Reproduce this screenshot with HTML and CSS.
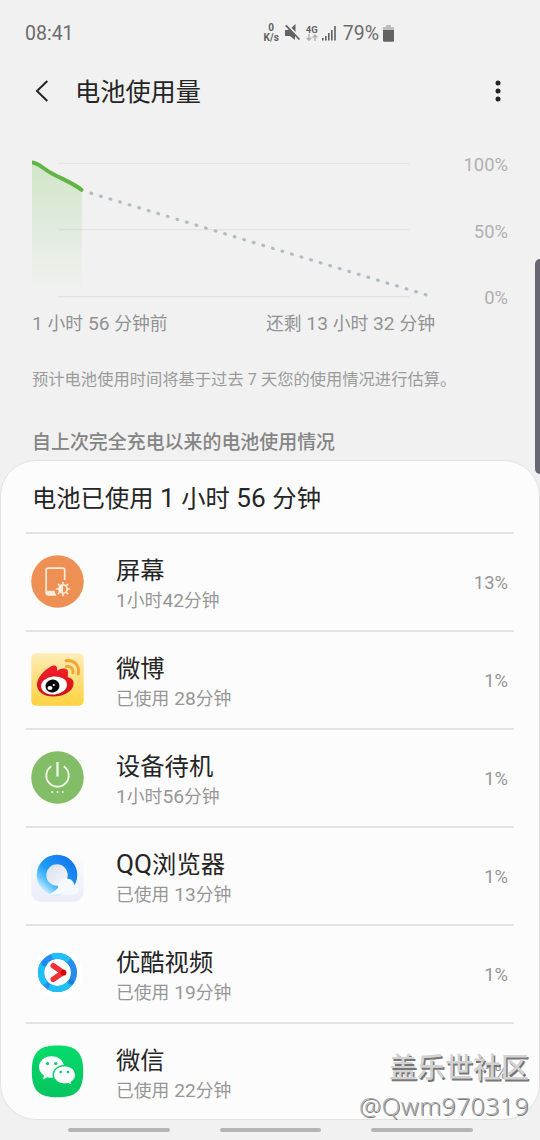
FILE: index.html
```html
<!DOCTYPE html>
<html lang="zh-CN">
<head>
<meta charset="utf-8">
<title>电池使用量</title>
<link rel="stylesheet" href="styles.css">
</head>
<body>
<div class="screen">
  <header class="status">
    <span class="clock">08:41</span>
    <div class="indicators">
      <div class="speed"><span>0</span><span>K/s</span></div>
      <svg class="mute" width="16" height="18" viewBox="0 0 16 18"><path fill="#626262" d="M0 6h3l2-1.800 5 6V16L5 12H0z M6.500 3.800 10.500 0v8z"/><path stroke="#f1f1f1" stroke-width="1.300" d="M2 1.300 15.500 15"/><path stroke="#626262" stroke-width="1.800" d="M.8 1.300 14.500 15.500"/></svg>
      <div class="network"><span>4G</span><svg width="12" height="8" viewBox="0 0 12 8" fill="none" stroke="#b0b0b0" stroke-width="1.400"><path d="M3 0v6M.6 3.600 3 6.200l2.400-2.600M9 7V1M6.600 3.600 9 1l2.400 2.600"/></svg></div>
      <svg class="signal" width="15" height="15" viewBox="0 0 15 15" fill="#626262"><path d="M0 12h1.600v2.500H0zM3 10h1.600v4.500H3zM6 7h1.600v7.500H6zM9 4h1.600v10.500H9zM12.200 0h1.600v14.500h-1.600z"/></svg>
      <span class="level">79%</span>
      <svg class="cell" width="11" height="17" viewBox="0 0 11 17"><path fill="#bdbdbd" d="M3 0h5v2h3v5H0V2h3z"/><path fill="#626262" d="M0 5h11v10.500a1.300 1.300 0 0 1-1.300 1.300H1.300A1.300 1.300 0 0 1 0 15.500z"/></svg>
    </div>
  </header>

  <nav class="titlebar">
    <svg width="14" height="22" viewBox="0 0 14 22" fill="none" stroke="#252525" stroke-width="2"><path d="M12.300 1 2 11l10.300 10"/></svg>
    <h1>电池使用量</h1>
    <svg class="more" width="6" height="22" viewBox="0 0 6 22" fill="#252525"><circle cx="3" cy="3" r="2.500"/><circle cx="3" cy="11" r="2.500"/><circle cx="3" cy="19" r="2.500"/></svg>
  </nav>

  <section class="chart">
    <div class="plot">
      <svg width="408" height="148" viewBox="0 0 408 148" fill="none">
        <defs><linearGradient id="charge" x1="0" y1="0" x2="0" y2="1"><stop offset="0" stop-color="#72c655" stop-opacity=".26"/><stop offset="1" stop-color="#72c655" stop-opacity="0"/></linearGradient></defs>
        <path stroke="#e3e3e3" stroke-width="1.300" d="M25.500 8.300H377M25.500 74.700H377M25.500 141.600H377"/>
        <path fill="url(#charge)" d="M0 7c8 1 12 7 20 12 11 6 21 9 29.800 16v103H0z"/>
        <path stroke="#63b446" stroke-width="4" stroke-linecap="round" d="M49.500 34.800C41 28 30 24 20 18.500 11 14 8 8.500 0 7.500"/>
        <path stroke="#b0bdc3" stroke-width="3.200" stroke-linecap="round" stroke-dasharray=".7 9.280" d="M59 38.200 396 140.400"/>
      </svg>
      <div class="scale"><span>100%</span><span>50%</span><span>0%</span></div>
    </div>
    <div class="range"><span><span class="n">1 </span>小时<span class="n"> 56 </span>分钟前</span><span>还剩<span class="n"> 13 </span>小时<span class="n"> 32 </span>分钟</span></div>
  </section>
  <p class="note">预计电池使用时间将基于过去 7 天您的使用情况进行估算。</p>
  <h2 class="section">自上次完全充电以来的电池使用情况</h2>

  <main class="card">
    <h3>电池已使用<span class="n"> 1 </span>小时<span class="n"> 56 </span>分钟</h3>
    <div class="row">
      <svg class="icon" viewBox="0 0 53 53"><circle cx="26.500" cy="26.500" r="26.300" fill="#ee8f54"/><path d="M33.700 25V15.200a2 2 0 0 0-2-2H17.200a2 2 0 0 0-2 2v22.600a2 2 0 0 0 2 2h8" fill="none" stroke="#ffecd9" stroke-width="1.700"/><path d="M15 35.800h8.500l1.300 4.200H17a2 2 0 0 1-2-2z" fill="#ffecd9"/><g stroke="#ffecd9" stroke-width="1.700" stroke-linecap="round"><circle cx="32" cy="34" r="4.200" fill="none"/><path d="M32 27.500v1M32 39.500v1M25.500 34h1M37.500 34h1M27.400 29.400l.7.700M35.900 37.900l.7.700M36.600 29.400l-.7.700M28.100 37.900l-.7.700"/></g><path d="M32 30a4 4 0 0 0 0 8z" fill="#ffecd9"/></svg>
      <div class="label"><b>屏幕</b><span class="used"><span class="n">1</span>小时<span class="n">42</span>分钟</span></div><em>13%</em>
    </div>
    <div class="row">
      <svg class="icon" viewBox="0 0 53 53"><defs><linearGradient id="wb" x1="0" y1="0" x2="0" y2="1"><stop stop-color="#ffecb8"/><stop offset="1" stop-color="#ffd23f"/></linearGradient><linearGradient id="wr" x1="0" y1="0" x2="0" y2="1"><stop stop-color="#f3202a"/><stop offset="1" stop-color="#cf1019"/></linearGradient></defs><rect x=".3" y=".3" width="52.400" height="52.400" rx="5" fill="url(#wb)"/><path fill="url(#wr)" d="M6 33c-1-7 7-16 13-19 5-3 8-1 7 4 6-4 12-3 11 3 0 2-1 3 1 3.500 3 1 5 3 4.500 7C41.500 39 32 43.500 22 43.500 13 43.500 7 39 6 33z"/><ellipse cx="23" cy="32.500" rx="13" ry="9" fill="#fff" transform="rotate(-7 23 32.500)"/><ellipse cx="21.500" cy="33" rx="7" ry="6.500" fill="#080808" transform="rotate(-12 21.500 33)"/><ellipse cx="19" cy="35" rx="2.500" ry="2" fill="#fff"/><circle cx="22.800" cy="32" r="1.100" fill="#fff"/><path d="M35 7.700c8-1.200 14 5 12.300 13.300M35.500 13.500c4.500-.6 7.200 2.500 6.300 6.200" fill="none" stroke="#f0a535" stroke-width="2.900" stroke-linecap="round"/></svg>
      <div class="label"><b>微博</b><span class="used">已使用<span class="n"> 28</span>分钟</span></div><em>1%</em>
    </div>
    <div class="row">
      <svg class="icon" viewBox="0 0 53 53"><circle cx="26.500" cy="26.500" r="26.300" fill="#84bd68"/><g fill="none" stroke="#f3ffe9" stroke-width="1.800"><path d="M26.500 11v14.500" stroke-width="2.200"/><path d="M20.300 15.200A11.200 11.200 0 1 0 32.700 15.200"/></g><g fill="#f3ffe9"><circle cx="21.200" cy="41" r="1"/><circle cx="26.500" cy="41" r="1"/><circle cx="31.800" cy="41" r="1"/></g></svg>
      <div class="label"><b>设备待机</b><span class="used"><span class="n">1</span>小时<span class="n">56</span>分钟</span></div><em>1%</em>
    </div>
    <div class="row">
      <svg class="icon" viewBox="0 0 53 53"><defs><linearGradient id="qb" x1="0" y1="0" x2="0" y2="1"><stop stop-color="#fcfdff"/><stop offset="1" stop-color="#e9eef7"/></linearGradient><linearGradient id="qr" x1=".85" y1=".2" x2=".2" y2=".95"><stop stop-color="#167aef"/><stop offset=".5" stop-color="#1c9bf7"/><stop offset=".78" stop-color="#66c7fb"/><stop offset="1" stop-color="#d9f1ff"/></linearGradient><linearGradient id="qc" x1="0" y1="0" x2="1" y2="1"><stop stop-color="#d8dfea"/><stop offset="1" stop-color="#f7f9fd"/></linearGradient></defs><rect x=".3" y=".3" width="52.400" height="52.400" rx="9" fill="url(#qb)"/><circle cx="26" cy="26" r="20.300" fill="url(#qr)"/><circle cx="26" cy="26" r="10.700" fill="url(#qc)"/><path fill="#f6f9fe" d="M17 45.800c4-1.500 6.500-3.500 10-6.800 0-5 3-9.500 8.500-9.500 5 0 7.500 3.500 8 6.500 5-.2 6 9.500-.5 9.800z"/></svg>
      <div class="label"><b><span class="n">QQ</span>浏览器</b><span class="used">已使用<span class="n"> 13</span>分钟</span></div><em>1%</em>
    </div>
    <div class="row">
      <svg class="icon" viewBox="0 0 53 53"><circle cx="26.500" cy="26.500" r="25.500" fill="#fff"/><circle cx="26.500" cy="25.500" r="16.500" fill="none" stroke="#258df2" stroke-width="6.200"/><path d="M12.500 17a16.500 16.500 0 0 0 2 20M21 9.900a16.500 16.500 0 0 1 17 3.500M18 39.700a16.500 16.500 0 0 0 22-5" fill="none" stroke="#20bff6" stroke-width="6.200"/><circle cx="13.500" cy="16.500" r="2.800" fill="#168df0"/><circle cx="40" cy="35" r="2.800" fill="#167fdf"/><path d="M22.300 18.800 32 25.500l-9.700 6.800" fill="none" stroke="#ee3137" stroke-width="5.600" stroke-linecap="round" stroke-linejoin="round"/><circle cx="32.500" cy="25.700" r="2.900" fill="#d20000"/></svg>
      <div class="label"><b>优酷视频</b><span class="used">已使用<span class="n"> 19</span>分钟</span></div><em>1%</em>
    </div>
    <div class="row">
      <svg class="icon" viewBox="0 0 53 53"><defs><linearGradient id="wx" x1="0" y1="0" x2="0" y2="1"><stop stop-color="#05db6b"/><stop offset="1" stop-color="#05c45f"/></linearGradient></defs><path fill="url(#wx)" d="M26.500.5C45 .5 52.200 7 52.200 26.500S45 52.300 26.500 52.300.8 46 .8 26.500 8 .5 26.500.5z"/><path fill="#fff" d="M20.500 11.300c-7 0-12.500 4.700-12.500 10.700 0 3.500 1.900 6.500 5 8.500l-1.200 4 4.500-2.300c1.500.4 2.800.6 4.200.6 7 0 12.500-4.800 12.500-10.800S27.500 11.300 20.500 11.300z"/><path fill="#fff" stroke="#05cd64" stroke-width="1.300" d="M33.500 20.500c-6.400 0-11.300 4-11.300 9.200s4.900 9.400 11.300 9.400c1.300 0 2.600-.2 3.700-.5l4 2.100-1-3.500c2.800-1.700 4.500-4.400 4.500-7.500 0-5.200-4.800-9.200-11.200-9.200z"/><g fill="#05cd64"><circle cx="16.500" cy="18.500" r="1.600"/><circle cx="24.700" cy="18.500" r="1.600"/><circle cx="29.700" cy="27" r="1.300"/><circle cx="37" cy="27" r="1.300"/></g></svg>
      <div class="label"><b>微信</b><span class="used">已使用<span class="n"> 22</span>分钟</span></div><em>1%</em>
    </div>
  </main>
  <footer class="handles"><i></i><i></i><i></i></footer>
  <div class="edge"></div>
  <div class="watermark"><strong>盖乐世社区</strong><span>@Qwm970319</span></div>
</div>
</body>
</html>
```
FILE: styles.css
```css
* { box-sizing: border-box; }
body { margin: 0; background: #f1f1f1; }
.screen {
  position: relative;
  display: flex;
  flex-direction: column;
  width: 540px;
  height: 1140px;
  overflow: hidden;
  font-family: Roboto, "Noto Sans CJK SC", sans-serif;
  font-weight: 400;
  color: #252525;
}
svg { display: block; flex: none; }
h1, h2, h3, p { margin: 0; font-weight: inherit; white-space: nowrap; }
.n { font-size: 1.08em; line-height: 1; white-space: pre; }

.status {
  display: flex;
  justify-content: space-between;
  height: 66px;
  padding: 0 146px 0 25px;
  align-items: center;
  color: #6c6c6c;
  font-size: 19.5px;
}
.indicators { display: flex; align-items: center; }
.speed, .network { display: flex; flex-direction: column; align-items: center; font-size: 10px; font-weight: 700; line-height: 10px; color: #626262; }
.mute { margin-left: 6px; }
.network { margin-left: 5px; line-height: 9px; font-size: 9.5px; }
.signal { margin-left: 4px; }
.level { margin-left: 6px; }
.cell { margin-left: 4px; }

.titlebar { display: flex; align-items: center; height: 50px; padding: 0 39px 0 35px; }
.titlebar h1 { margin-left: 26px; padding-top: 4px; font-size: 25.2px; line-height: 36px; }
.more { margin-left: auto; }

.chart { padding: 39px 32px 0; height: 221px; }
.plot { display: flex; justify-content: space-between; height: 148px; }
.scale { display: flex; flex-direction: column; justify-content: space-between; height: 155px; margin-top: -1px; text-align: right; color: #b0b0b0; font-size: 18.4px; line-height: 22px; }
.range { display: flex; justify-content: space-between; width: 403px; margin-top: 8px; color: #929292; font-size: 17.8px; line-height: 26px; }

.note { padding: 0 0 0 32px; height: 84px; line-height: 85px; color: #9b9b9b; font-size: 16.3px; }
.section { padding: 1px 0 0 32px; height: 39px; line-height: 41px; color: #858585; font-size: 18.95px; font-weight: 500; }

.card {
  height: 660px;
  padding: 0 25px;
  background: #fcfcfc;
  border: 1px solid #e2e2e2;
  border-radius: 36px;
}
.card h3 { padding-left: 6px; height: 71px; line-height: 75px; font-size: 24.3px; }
.row { display: flex; align-items: center; height: 98px; padding: 0 6px 0 5px; border-top: 2px solid #e3e3e3; }
.icon { width: 53px; height: 53px; margin-bottom: 2px; }
.label { display: flex; flex-direction: column; margin: 3px 0 0 32px; }
.label b { font-size: 24.3px; line-height: 34px; font-weight: inherit; }
.used { font-size: 17.8px; line-height: 26px; color: #969696; }
.row em { margin-left: auto; font-style: normal; font-size: 18.4px; color: #969696; }

.handles { display: flex; gap: 50px; padding: 8px 0 0 68px; }
.handles i { width: 101.500px; height: 4px; border-radius: 2px; background: #b5b5b5; }

.edge { position: absolute; right: 0; top: 259px; width: 5.500px; height: 215px; background: #686675; border-radius: 5px 0 0 5px; }
.watermark { position: absolute; right: 11px; top: 1051px; display: flex; flex-direction: column; align-items: flex-end; color: #d2d2d2; text-shadow: 1.500px 1.500px 0 #777; }
.watermark strong { font-size: 28px; line-height: 36px; font-weight: 500; }
.watermark span { margin-top: 1px; font-family: "Open Sans", sans-serif; font-size: 24.7px; letter-spacing: .5px; line-height: 36px; font-weight: 300; color: #a8a8a8; text-shadow: 1px 1px 0 #7a7a7a; }
```
